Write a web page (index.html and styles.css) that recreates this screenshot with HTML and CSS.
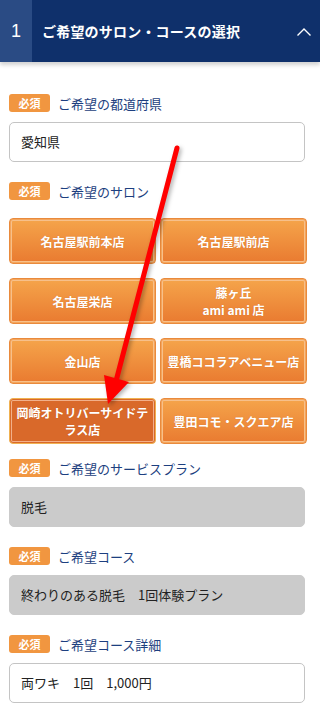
FILE: index.html
```html
<!DOCTYPE html>
<html>
<head>
    <meta charset="utf-8">
    <title>ご希望のサロン・コースの選択</title>
    <link rel="stylesheet" href="styles.css">
</head>
<body>
    <div class="step-head">
        <div class="step-num">1</div>
        <div class="step-title">ご希望のサロン・コースの選択</div>
        <svg class="chevron" width="16" height="10" viewBox="0 0 16 10"><path d="M1.5 8.5 L8 2 L14.5 8.5" fill="none" stroke="#fff" stroke-width="1.4"/></svg>
    </div>

    <div class="form">
        <div class="label"><span class="req">必須</span>ご希望の都道府県</div>
        <div class="field">愛知県</div>

        <div class="label"><span class="req">必須</span>ご希望のサロン</div>
        <div class="salons">
            <div class="salon">名古屋駅前本店</div>
            <div class="salon">名古屋駅前店</div>
            <div class="salon">名古屋栄店</div>
            <div class="salon">藤ヶ丘<br>ami ami 店</div>
            <div class="salon">金山店</div>
            <div class="salon">豊橋ココラアベニュー店</div>
            <div class="salon selected">岡崎オトリバーサイドテラス店</div>
            <div class="salon">豊田コモ・スクエア店</div>
        </div>

        <div class="label"><span class="req">必須</span>ご希望のサービスプラン</div>
        <div class="field locked">脱毛</div>

        <div class="label"><span class="req">必須</span>ご希望コース</div>
        <div class="field locked">終わりのある脱毛　1回体験プラン</div>

        <div class="label"><span class="req">必須</span>ご希望コース詳細</div>
        <div class="field">両ワキ　1回　1,000円</div>
    </div>

    <!-- annotation arrow -->
    <svg class="arrow" width="320" height="708" viewBox="0 0 320 708">
        <line x1="177" y1="148" x2="115" y2="385" stroke="#ff0000" stroke-width="5" stroke-linecap="round"/>
        <polygon points="104,375 129,382 108,404" fill="#ff0000"/>
    </svg>
</body>
</html>
```

FILE: styles.css
```css
body {
    margin: 0;
    width: 320px;
    font-family: "Noto Sans CJK JP", "Noto Sans", sans-serif;
    background: #fff;
    color: #222;
    position: relative;
}

.step-head {
    display: flex;
    align-items: center;
    height: 62px;
    background: #0f306b;
    color: #fff;
    box-shadow: 0 3px 4px rgba(0, 0, 0, 0.18);
}

.step-num {
    width: 32px;
    height: 100%;
    background: #2a4b84;
    display: flex;
    align-items: center;
    justify-content: center;
    font-family: "Liberation Sans", sans-serif;
    font-size: 18px;
}

.step-title {
    flex: 1;
    padding-left: 10px;
    font-size: 14px;
    font-weight: bold;
    letter-spacing: 0.2px;
}

.chevron {
    margin-right: 8px;
    margin-top: 2px;
}

.form {
    padding: 32px 15px 0 9px;
}

.label {
    display: flex;
    align-items: center;
    height: 18px;
    font-size: 13px;
    color: #1d3f80;
    margin-bottom: 10px;
}

.req {
    display: inline-block;
    width: 41px;
    height: 18px;
    line-height: 18px;
    margin-right: 8px;
    border-radius: 3px;
    background: #f19640;
    color: #fff;
    font-size: 11px;
    font-weight: bold;
    text-align: center;
}

.field {
    height: 38px;
    line-height: 38px;
    border: 1px solid #c4c4c4;
    border-radius: 5px;
    padding: 0 11px;
    font-size: 13px;
    color: #222;
    margin-bottom: 20px;
}

.field.locked {
    background: #cbcbcb;
    border-color: #cbcbcb;
}

.salons {
    display: grid;
    grid-template-columns: 147px 147px;
    column-gap: 4px;
    row-gap: 14px;
    margin: 18px -2px 15px 0;
}

.salon {
    height: 46px;
    display: flex;
    align-items: center;
    justify-content: center;
    text-align: center;
    box-sizing: border-box;
    padding: 0 4px;
    border-radius: 4px;
    background: linear-gradient(#f5a54b, #e97a30);
    border: 1px solid #e98a3c;
    box-shadow: inset 0 0 0 1px #f4a55c, inset 0 0 0 2px #f7c08a;
    color: #fff;
    font-size: 12px;
    font-weight: bold;
    line-height: 17px;
    text-shadow: 0 0 1px rgba(160, 70, 10, 0.4);
}

.salon.selected {
    background: #d9692a;
    border-color: #f0b150;
    box-shadow: inset 0 0 0 1px #d9692a, inset 0 0 0 2px #f2b08a;
}

.arrow {
    position: absolute;
    left: 0;
    top: 0;
    pointer-events: none;
    filter: drop-shadow(2px 2px 2px rgba(0, 0, 0, 0.3));
}
```
